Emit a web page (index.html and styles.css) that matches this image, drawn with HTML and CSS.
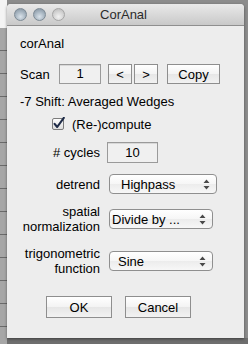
FILE: index.html
```html
<!DOCTYPE html>
<html lang="en">
<head>
    <meta charset="UTF-8">
    <title>CorAnal</title>
    <link rel="stylesheet" href="styles.css">
</head>
<body>

    <div class="window">
        <div class="titlebar">
            <div class="lights">
                <span class="light"></span>
                <span class="light"></span>
                <span class="light off"></span>
            </div>
            <div class="title">CorAnal</div>
        </div>

        <div class="content">
            <div class="name">corAnal</div>

            <div class="scan-row">
                <span class="scan-label">Scan</span>
                <div class="field scan-field">1</div>
                <button class="btn small">&lt;</button>
                <button class="btn small">&gt;</button>
                <button class="btn copy">Copy</button>
            </div>

            <div class="shift">-7 Shift: Averaged Wedges</div>

            <div class="check-row">
                <svg class="checkbox" width="13" height="13" viewBox="0 0 13 13">
                    <defs>
                        <linearGradient id="cb" x1="0" y1="0" x2="0" y2="1">
                            <stop offset="0" stop-color="#ffffff"/>
                            <stop offset="1" stop-color="#dcdcdc"/>
                        </linearGradient>
                    </defs>
                    <rect x="0.5" y="1.5" width="11" height="11" rx="1.5" fill="url(#cb)" stroke="#7c7c7c"/>
                    <path d="M2.6 6.8 L5.2 10 L11.8 0.8" fill="none" stroke="#1f2c48" stroke-width="2.1" stroke-linecap="round" stroke-linejoin="round"/>
                </svg>
                <span>(Re-)compute</span>
            </div>

            <div class="form-row cycles-row">
                <label class="label">#&nbsp;cycles</label>
                <div class="field cycles-field">10</div>
            </div>

            <div class="form-row">
                <label class="label">detrend</label>
                <div class="popup">
                    <span class="popup-text pad-highpass">Highpass</span>
                    <svg class="arrows" width="7" height="11" viewBox="0 0 7 11"><path d="M3.5 0.5 L6.5 4 L0.5 4 Z M3.5 10.5 L6.5 7 L0.5 7 Z" fill="#4a4a4a"/></svg>
                </div>
            </div>

            <div class="form-row two-line">
                <label class="label">spatial<br>normalization</label>
                <div class="popup narrow">
                    <span class="popup-text pad-divide">Divide by ...</span>
                    <svg class="arrows" width="7" height="11" viewBox="0 0 7 11"><path d="M3.5 0.5 L6.5 4 L0.5 4 Z M3.5 10.5 L6.5 7 L0.5 7 Z" fill="#4a4a4a"/></svg>
                </div>
            </div>

            <div class="form-row two-line trig-row">
                <label class="label">trigonometric<br>function</label>
                <div class="popup narrow">
                    <span class="popup-text pad-sine">Sine</span>
                    <svg class="arrows" width="7" height="11" viewBox="0 0 7 11"><path d="M3.5 0.5 L6.5 4 L0.5 4 Z M3.5 10.5 L6.5 7 L0.5 7 Z" fill="#4a4a4a"/></svg>
                </div>
            </div>

            <div class="actions">
                <button class="btn action">OK</button>
                <button class="btn action">Cancel</button>
            </div>
        </div>
    </div>

</body>
</html>
```

FILE: styles.css
```css
body {
    margin: 0;
    padding: 4px 0 0 7px;
    width: 248px;
    height: 344px;
    box-sizing: border-box;
    overflow: hidden;
    font-family: "Liberation Sans", Arial, sans-serif;
    font-size: 13px;
    color: #000;
    background-color: #8c8c8c;
    background-image:
        linear-gradient(#f4f4f4, #f4f4f4),
        repeating-linear-gradient(#a6a6a6 0, #a6a6a6 22px, #6a6a6a 22px, #6a6a6a 23px),
        linear-gradient(to bottom, transparent 338px, #6e6e6e 338px);
    background-size: 7px 28px, 7px 100%, 100% 100%;
    background-position: 0 0, 0 28px, 0 0;
    background-repeat: no-repeat;
}

.window {
    width: 237px;
    height: 334px;
    background-color: #ededed;
    border-radius: 4px 4px 0 0;
    box-shadow: 0 1px 3px rgba(0, 0, 0, 0.45);
    overflow: hidden;
}

.titlebar {
    position: relative;
    height: 21px;
    background: linear-gradient(#e9e9e9, #c9c9c9);
    border-bottom: 1px solid #8f8f8f;
    display: flex;
    align-items: center;
    justify-content: center;
}

.lights {
    position: absolute;
    left: 7px;
    top: 4px;
    display: flex;
    gap: 6px;
}

.light {
    width: 13px;
    height: 13px;
    border-radius: 50%;
    box-sizing: border-box;
    border: 1px solid #7d8a95;
    background: radial-gradient(circle at 50% 70%, #d9e2ea 0, #a5b3bf 55%, #7f8e9b 100%);
}

.light.off {
    border-color: #a5a5a5;
    background: radial-gradient(circle at 50% 70%, #f2f2f2 0, #d2d2d2 55%, #b5b5b5 100%);
}

.title {
    color: #2b2b2b;
    margin-left: -4px;
}

.content {
    padding: 10px 0 0 13px;
}

.name {
    line-height: 16px;
}

.scan-row {
    display: flex;
    align-items: center;
    margin-top: 12px;
    height: 20px;
}

.scan-label {
    width: 39px;
}

.field {
    box-sizing: border-box;
    height: 20px;
    line-height: 18px;
    text-align: center;
    background-color: #f0f0f0;
    border: 1px solid #9a9a9a;
    box-shadow: inset 0 1px 0 #d8d8d8;
}

.scan-field {
    width: 42px;
}

.btn {
    box-sizing: border-box;
    font-family: "Liberation Sans", Arial, sans-serif;
    font-size: 13px;
    color: #000;
    height: 20px;
    padding: 0;
    border: 1px solid #8e8e8e;
    border-radius: 0;
    background: linear-gradient(#ffffff, #f3f3f3 50%, #e6e6e6 51%, #f2f2f2);
}

.btn.small {
    width: 24px;
    margin-left: 2px;
}

.scan-field + .btn.small {
    margin-left: 7px;
}

.btn.copy {
    width: 53px;
    margin-left: 9px;
}

.shift {
    margin-top: 10px;
    line-height: 16px;
}

.check-row {
    display: flex;
    align-items: center;
    height: 16px;
    margin-top: 6px;
    padding-left: 32px;
}

.checkbox {
    margin-right: 7px;
    margin-top: -1px;
}

.form-row {
    display: flex;
    align-items: center;
    margin-top: 11px;
}

.cycles-row {
    margin-top: 10px;
}

.label {
    width: 80px;
    text-align: right;
    margin-right: 7px;
}

.cycles-field {
    width: 51px;
    height: 21px;
    line-height: 19px;
}

.popup {
    box-sizing: border-box;
    width: 108px;
    height: 20px;
    margin-left: 2px;
    display: flex;
    align-items: center;
    justify-content: space-between;
    background: linear-gradient(#ffffff, #f6f6f6 50%, #ececec 51%, #f7f7f7);
    border: 1px solid #8f8f8f;
    border-radius: 4px;
    padding-right: 6px;
}

.popup.narrow {
    width: 104px;
}

.pad-highpass {
    padding-left: 11px;
}

.pad-divide {
    padding-left: 2px;
}

.pad-sine {
    padding-left: 8px;
}

.two-line {
    margin-top: 10px;
}

.two-line .label {
    line-height: 15px;
}

.trig-row {
    margin-top: 12px;
}

.actions {
    display: flex;
    gap: 13px;
    margin-top: 20px;
    padding-left: 26px;
}

.btn.action {
    width: 66px;
    height: 22px;
}
```
